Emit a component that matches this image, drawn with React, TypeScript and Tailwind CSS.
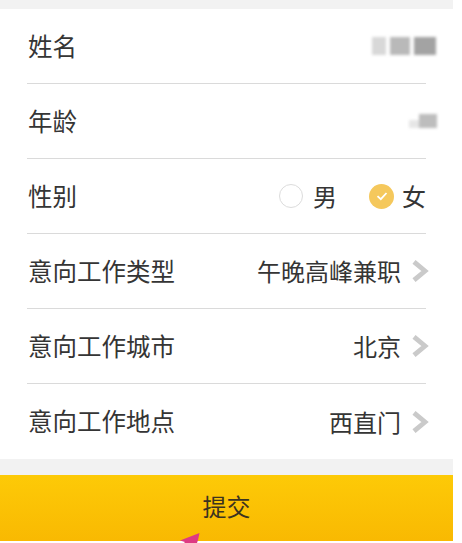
import React from "react";

const font = { fontFamily: '"Noto Sans CJK SC", "Noto Sans", sans-serif' };

const Chevron = () => (
  <svg width="18" height="22" viewBox="0 0 18 22" className="ml-[10px] mr-[-3px] shrink-0">
    <path d="M3 1.8 L14 11 L3 20.2" fill="none" stroke="#cacaca" strokeWidth="4.8" />
  </svg>
);

const Row = ({ label, children, last }: { label: string; children?: React.ReactNode; last?: boolean }) => (
  <div className={`flex h-[75px] items-center justify-between ${last ? "" : "border-b border-[#dadada]"}`}>
    <span className="pl-[1px] text-[24.5px] text-[#353535]">{label}</span>
    <div className="flex items-center text-[24px] text-[#353535]">{children}</div>
  </div>
);

export default function App() {
  return (
    <div className="relative h-[543px] w-[462px] overflow-hidden bg-white" style={font}>
      <div className="w-[453px] bg-[#f2f2f2] pt-[9px]">
        <div className="bg-white px-[27px]">
          <Row label="姓名">
            <div className="mr-[-10px] flex gap-[4px] blur-[1.5px]">
              <div className="h-[18px] w-[14px] bg-[#d8d8d8]" />
              <div className="h-[18px] w-[20px] bg-[#b9b9b9]" />
              <div className="h-[18px] w-[22px] bg-[#a3a3a3]" />
            </div>
          </Row>
          <Row label="年龄">
            <div className="mr-[-11px] flex items-end blur-[1.5px]">
              <div className="h-[8px] w-[10px] bg-[#e6e6e6]" />
              <div className="h-[14px] w-[18px] bg-[#bdbdbd]" />
            </div>
          </Row>
          <Row label="性别">
            <span className="mr-[10px] h-[24px] w-[24px] rounded-full border border-[#dcdcdc] bg-white" />
            <span>男</span>
            <span className="ml-[32px] mr-[8px] flex h-[25px] w-[25px] items-center justify-center rounded-full bg-[#f5c85c]">
              <svg width="14" height="14" viewBox="0 0 14 14">
                <path d="M2.5 7.2 L5.8 10.2 L11.5 4" fill="none" stroke="#fff" strokeWidth="1.8" />
              </svg>
            </span>
            <span>女</span>
          </Row>
          <Row label="意向工作类型">
            <span>午晚高峰兼职</span>
            <Chevron />
          </Row>
          <Row label="意向工作城市">
            <span>北京</span>
            <Chevron />
          </Row>
          <Row label="意向工作地点" last>
            <span>西直门</span>
            <Chevron />
          </Row>
        </div>
        <div className="h-[16px] bg-[#f2f2f2]" />
        <div className="flex h-[66px] items-center justify-center bg-gradient-to-b from-[#fdca07] to-[#f9b902] pb-[4px] text-[24px] text-[#3b3320]">
          提交
        </div>
      </div>
      <svg className="absolute left-[176px] top-[530px]" width="30" height="13" viewBox="0 0 30 13">
        <path d="M23.5 3 L4 10.5 L9 12 L8 13 L21 13 L22 10 Z" fill="#de3a83" />
      </svg>
    </div>
  );
}
